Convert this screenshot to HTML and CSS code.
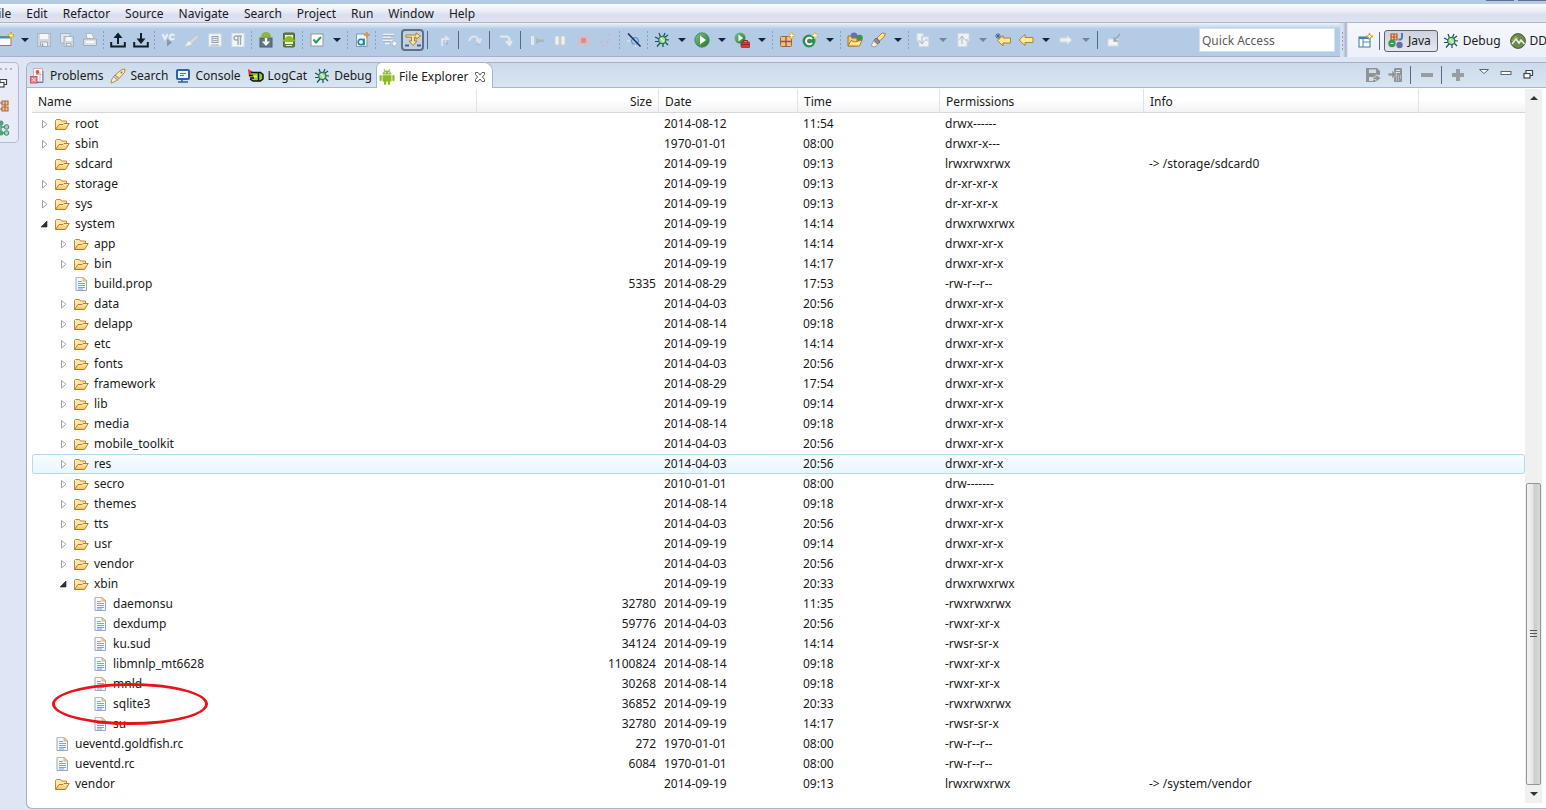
FILE: index.html
```html
<!DOCTYPE html>
<html lang="en">
<head>
<meta charset="utf-8">
<title>File Explorer</title>
<link rel="stylesheet" href="styles.css">
</head>
<body>
<svg class="defs" aria-hidden="true">
<defs>
<linearGradient id="gold" x1="0" y1="0" x2="0" y2="1"><stop offset="0" stop-color="#fff2bf"/><stop offset="1" stop-color="#f6bd5c"/></linearGradient>
<linearGradient id="green" x1="0" y1="0" x2="1" y2="1"><stop offset="0" stop-color="#7cc47c"/><stop offset="1" stop-color="#1c7a34"/></linearGradient>
</defs>
<symbol id="folder" viewBox="0 0 16 16"><path d="M1.500 13.500V4.500L2.500 3.500H6.500L7.500 5H12.500V8" fill="#fde7a9" stroke="#c08a3c"/><path d="M1.500 13.500L5 8.500H9L10 7.500H15.200L11.500 13.500Z" fill="url(#gold)" stroke="#b9792e"/></symbol>
<symbol id="file" viewBox="0 0 16 16"><path d="M3 1.500H10L13.500 5V14.500H3Z" fill="#f3f8ff" stroke="#94a7c4"/><path d="M3 1.500H10L13.500 5" fill="none" stroke="#c9b98a"/><path d="M10 1.500V5H13.500Z" fill="#f5deb0" stroke="#c9a86a" stroke-width=".8"/><path d="M5 5.500H9M5 7.500H12M5 9.500H12M5 11.500H12M5 13H10" stroke="#7ea2da"/></symbol>
<symbol id="closed" viewBox="0 0 16 16"><path d="M4.500 4.500V12L9 8.250Z" fill="#fff" stroke="#a2a2a2"/></symbol>
<symbol id="open" viewBox="0 0 16 16"><path d="M9 5V11H3Z" fill="#333" stroke="#222" stroke-width=".6"/></symbol>
<symbol id="down" viewBox="0 0 16 16"><path d="M4 6H12L8 10Z" fill="currentColor"/></symbol>
<symbol id="bug" viewBox="0 0 16 16"><path d="M5 1L6.500 5M11 1L9.500 4.500M1 5L5 7M1 9.500H5M3 14.500L6 11M9 11V15M11 10L14 13M11 7.500L15 8M10.500 5.500L14 3" stroke="#174f55" stroke-width="1.200" fill="none"/><circle cx="8.300" cy="8" r="3.600" fill="#a9dc9b" stroke="#2c7652" stroke-width="1.300"/><path d="M7 6L10 10" stroke="#e9ffe0"/></symbol>
<symbol id="torch" viewBox="0 0 16 16"><path d="M5 7L12 1.500L15 1L14.500 4.500L9 10.500Z" fill="#ffe9a3" stroke="#b78b42"/><path d="M5 7L9 10.500L7.500 12L3.500 8.500Z" fill="#d9d3e8" stroke="#9a82a6"/><path d="M3.500 8.500L7.500 12L4 14L1 15L1.500 12Z" fill="#f7ead0" stroke="#b1915e"/><circle cx="11.500" cy="4.500" r="1" fill="#5e79ba"/></symbol>
<symbol id="console" viewBox="0 0 16 16"><rect x="2" y="2" width="12" height="9" rx="1" fill="#e9f3ff" stroke="#2d62a4" stroke-width="2"/><path d="M5 5.500H11M5 7.500H9" stroke="#4d75a9"/><path d="M3 14H13M7 12V14" stroke="#2d62a4" stroke-width="1.600"/></symbol>
<symbol id="problems" viewBox="0 0 16 16"><path d="M3.500 .5H12.500V13.500H3.500Z" fill="#fff" stroke="#d3aeb2"/><path d="M7 2V6M10 4V13M6 6.500H12" stroke="#d9b4b4"/><circle cx="7.500" cy="4" r="1.900" fill="#e0554b"/><path d="M13 3V14.500H6" stroke="#5d84b5" fill="none"/><rect x=".5" y="8.500" width="6.500" height="6.500" fill="#e98a8a" stroke="#c95560"/><path d="M2 10L5.500 13.500M5.500 10L2 13.500" stroke="#f9dada"/></symbol>
<symbol id="logcat" viewBox="0 0 16 16"><path d="M0 1L6 4.500L1 9Z" fill="#e3311f"/><path d="M3 4.500H12.500L15 6.500V11L12.500 13H5L2 11" fill="#92c83e" stroke="#111" stroke-width="1.500"/><path d="M1 7.500H5M2 10H6M10.500 5V13" stroke="#111" stroke-width="1.400"/><path d="M6 8.500H9" stroke="#ffe84a" stroke-width="2"/></symbol>
<symbol id="android" viewBox="0 0 16 16"><g fill="#8db92a"><path d="M3.500 5.500A4.500 4 0 0 1 12.500 5.500Z"/><path d="M3.500 6.200H12.500V12.500H3.500Z"/><rect x=".5" y="6" width="2.200" height="6" rx="1"/><rect x="13.300" y="6" width="2.200" height="6" rx="1"/><rect x="5" y="11" width="2.200" height="5" rx="1"/><rect x="8.800" y="11" width="2.200" height="5" rx="1"/></g><path d="M5 0L6.200 2M11 0L9.800 2" stroke="#8db92a"/><circle cx="6.200" cy="3.800" r=".7" fill="#fff"/><circle cx="9.800" cy="3.800" r=".7" fill="#fff"/></symbol>
<symbol id="new" viewBox="0 0 16 16"><rect x="1" y="4.500" width="12" height="9" fill="#f8fbff" stroke="#9a803d"/><path d="M1 5.500H13" stroke="#4e87c7" stroke-width="2"/><path d="M13 0V7M9.500 3.500H16" stroke="#d8a820" stroke-width="2"/><path d="M13 1.500V5.500M11 3.500H15" stroke="#fff7b0"/></symbol>
<symbol id="save" viewBox="0 0 16 16"><path d="M1.500 1.500H14.500V14.500H1.500Z" fill="#cfd6df" stroke="#a9b4c1"/><path d="M4 2H12V7H4Z" fill="#f4f6f8"/><path d="M4.500 10H11.500V14.500H4.500Z" fill="#eef1f4" stroke="#a5afbc"/><path d="M6.500 11.500V14" stroke="#8f9aa8" stroke-width="1.500"/></symbol>
<symbol id="saveall" viewBox="0 0 16 16"><path d="M1.500 1.500H11V11H1.500Z" fill="#e3e7ec" stroke="#aab3bf"/><path d="M5 4.500H14.500V14.500H5Z" fill="#cfd6df" stroke="#a9b4c1"/><path d="M7 5H12.500V9H7Z" fill="#f7f8fa"/><path d="M7.500 11.500H12V14H7.500Z" fill="#f2f4f6" stroke="#a5afbc"/></symbol>
<symbol id="print" viewBox="0 0 16 16"><path d="M4 1.500H10L12 6.500H5Z" fill="#f4f5f7" stroke="#adb5c0"/><path d="M1.500 7H14.500V13.500H1.500Z" fill="#dde1e7" stroke="#a4adb9"/><path d="M4 10H12" stroke="#f8f9fa" stroke-width="2"/></symbol>
<symbol id="upload" viewBox="0 0 16 16"><path d="M1.200 10V14.500H14.800V10" fill="none" stroke="#151c29" stroke-width="2"/><path d="M8 12V4" stroke="#151c29" stroke-width="2"/><path d="M3.500 6L8 .5L12.500 6Z" fill="#151c29"/></symbol>
<symbol id="download" viewBox="0 0 16 16"><path d="M1.200 10V14.500H14.800V10" fill="none" stroke="#151c29" stroke-width="2"/><path d="M8 1V8" stroke="#151c29" stroke-width="2"/><path d="M3.500 6.500L8 12L12.500 6.500Z" fill="#151c29"/></symbol>
<symbol id="vc" viewBox="0 0 16 16"><path d="M1.500 2L4 7L6.500 2M13.500 3.500C10 1 8 4 9 6C10 8 12 7.500 13.500 6.500" fill="none" stroke="#edf1f5" stroke-width="2"/><path d="M6 7L11 10.500L6 14.500Z" fill="#8898aa"/></symbol>
<symbol id="pencil" viewBox="0 0 16 16"><path d="M3 12L6 9L13 3L14.500 5L8 11Z" fill="#dcdcd4" stroke="#c2c9ce"/><path d="M1 14.500L8 12L4.500 9Z" fill="#f8f2da"/></symbol>
<symbol id="block" viewBox="0 0 16 16"><rect x="2" y="2" width="12" height="12" fill="#f5f6f6" stroke="#dde2e6"/><rect x="5" y="4.500" width="6" height="6" fill="#e9edf0" stroke="#8d9caf"/><path d="M4 13H12M6 6.500H10M6 8.500H10" stroke="#9aa8b8"/></symbol>
<symbol id="pilcrow" viewBox="0 0 16 16"><rect x="2" y="1.500" width="12" height="13" fill="#f5f6f6" stroke="#dde2e6"/><path d="M12 4H6A2 2 0 0 0 6 8H8M8 4V13M10.500 4V13" fill="none" stroke="#9ba8b8" stroke-width="1.400"/></symbol>
<symbol id="sdk" viewBox="0 0 16 16"><path d="M3 5A5 5 0 0 1 13 5Z" fill="#8ab63a"/><rect x="2" y="6" width="12" height="9" fill="#637687" stroke="#49606f"/><path d="M8 6V12" stroke="#fff" stroke-width="2.400"/><path d="M4 9.500H12L8 14Z" fill="#fff"/></symbol>
<symbol id="avd" viewBox="0 0 16 16"><rect x="2.500" y="1" width="11" height="14" rx="1" fill="#687b42" stroke="#53643b"/><rect x="4" y="3" width="8" height="9" fill="#e8f1d8"/><path d="M4 8A4 4 0 0 1 12 8V10H4Z" fill="#8bbd29"/><path d="M1.500 8.500H14.500" stroke="#8bbd29" stroke-width="2"/><path d="M5 13.500H11" stroke="#dce8c8"/></symbol>
<symbol id="check" viewBox="0 0 16 16"><rect x="2" y="2" width="12" height="12" fill="#fff" stroke="#9a9a87"/><path d="M4.500 7.500L7 10.500L12 5" fill="none" stroke="#269a64" stroke-width="2"/></symbol>
<symbol id="newa" viewBox="0 0 16 16"><path d="M2.500 2H13V14.500H2.500Z" fill="#eaf5f7" stroke="#879b9e"/><circle cx="7" cy="10" r="2.800" fill="none" stroke="#168aa4" stroke-width="1.600"/><path d="M10 6.500V13.500" stroke="#168aa4" stroke-width="1.600"/><path d="M13 0V6M10 3H16" stroke="#e29347" stroke-width="1.800"/></symbol>
<symbol id="skip" viewBox="0 0 16 16"><path d="M1 2.500H12M1 5.500H9M1 8.500H12M3 11.500H8" stroke="#edf1f4" stroke-width="1.400"/><path d="M1 3.500H12M1 6.500H9M1 9.500H8" stroke="#95a7bb" stroke-width=".7"/><path d="M8 11H11V8L15.500 11.500L11 15V12.500H8Z" fill="#fff" stroke="#9ba9b8" stroke-width=".7"/></symbol>
<symbol id="filters" viewBox="0 0 16 16"><path d="M1 3H11V.8L15.500 4L11 7.200V5.200H9.500V9H12L8 13.500L4 9H6.500V5.200H1Z" fill="#fbe58c" stroke="#a4743f" stroke-width=".9"/><path d="M0 13.500H4M12 13.500H16" stroke="#34699d" stroke-width="2"/></symbol>
<symbol id="stepin" viewBox="0 0 16 16"><path d="M6 14V7H12M9 4L12.500 7L9 10" fill="none" stroke="#dfe4ea" stroke-width="2"/><path d="M11 8V13" stroke="#98aabd"/></symbol>
<symbol id="stepover" viewBox="0 0 16 16"><path d="M2 9C4 3 10 3 12 9M9 8L12.500 10.500L14 6.500" fill="none" stroke="#dfe4ea" stroke-width="2"/><path d="M8 12.500H13" stroke="#aebac8"/></symbol>
<symbol id="stepret" viewBox="0 0 16 16"><path d="M2 4.500H9Q12 5 11.500 11M8 9L11.500 13L14 9" fill="none" stroke="#e6e9ed" stroke-width="2"/></symbol>
<symbol id="resume" viewBox="0 0 16 16"><path d="M2 4H5V13H2Z" fill="#e5e9ed"/><path d="M7 6L11 7.500H15V10H11L7 12Z" fill="#a8b7b8"/></symbol>
<symbol id="pause" viewBox="0 0 16 16"><path d="M3 4H7V13H3ZM9 4H13V13H9Z" fill="#f0f0ea" stroke="#c7ccd0" stroke-width=".8"/></symbol>
<symbol id="stop" viewBox="0 0 16 16"><rect x="3" y="4" width="11" height="9" rx="2" fill="#dfb9bf"/><rect x="6" y="6" width="5" height="5" rx="1" fill="#d48f92"/></symbol>
<symbol id="disc" viewBox="0 0 16 16"><path d="M2 11L5 8M8 12L12 6M10 4L13 2M3 14H6" stroke="#c6bccb" stroke-width="1.500"/></symbol>
<symbol id="nobp" viewBox="0 0 16 16"><circle cx="9" cy="9" r="3.500" fill="#a7cae8" stroke="#5483b5"/><path d="M2 1.500L14.500 14.500" stroke="#172c59" stroke-width="1.500"/><path d="M4 9H1M10 15L9 12" stroke="#e5edf7"/></symbol>
<symbol id="run" viewBox="0 0 16 16"><circle cx="8" cy="8" r="7.200" fill="url(#green)" stroke="#39834b" stroke-width=".8"/><path d="M6 3.500L12 8L6 12.500Z" fill="#fff"/></symbol>
<symbol id="runext" viewBox="0 0 16 16"><circle cx="6" cy="6" r="5.500" fill="url(#green)"/><path d="M4.500 2.500L9 6L4.500 9.500Z" fill="#fff"/><rect x="7" y="10" width="9" height="5.500" rx="1" fill="#d83b32" stroke="#8e2925" stroke-width=".7"/><path d="M9.500 10V8.500H13.500V10M7 12.500H16" fill="none" stroke="#842c2b"/></symbol>
<symbol id="pkg" viewBox="0 0 16 16"><rect x="1.500" y="4.500" width="11" height="10" rx="1" fill="#efbd8d" stroke="#a0673a"/><path d="M7 4V15M1 9.500H13" stroke="#935a33" stroke-width="1.300"/><path d="M12.500 0V7M9 3.500H16" stroke="#dfb73d" stroke-width="2"/><path d="M12.500 1.500V5.500M10.500 3.500H14.500" stroke="#fff"/></symbol>
<symbol id="class" viewBox="0 0 16 16"><circle cx="7" cy="9" r="6.500" fill="#2f9054"/><path d="M10 7A3.300 3.300 0 1 0 10 11" fill="none" stroke="#fff" stroke-width="2"/><path d="M13 0V7M9.500 3.500H16" stroke="#d8bd4f" stroke-width="2"/><path d="M13 1.500V5.500M11 3.500H15" stroke="#fff"/></symbol>
<symbol id="type" viewBox="0 0 16 16"><circle cx="7" cy="4" r="3.500" fill="#6470b5"/><circle cx="12.500" cy="6" r="3.300" fill="#389551"/><path d="M1 14V4H4L5 6H10V14Z" fill="#f3cd66" stroke="#a96d28"/><path d="M1 14L4 8.500L8 10L15 8L12.500 14Z" fill="#ffe89c" stroke="#b37b28"/></symbol>
<symbol id="brush" viewBox="0 0 16 16"><path d="M7 6L12 1L15.500 1.500L14 5L9.500 9Z" fill="#ffe28d" stroke="#b78131"/><path d="M6 6L10 10L7.500 12L4 8.500Z" fill="#8194ad" stroke="#6d6775"/><path d="M3.500 9L7.500 12.500L5 15L1 14Z" fill="#f7efdf" stroke="#a99b8c"/></symbol>
<symbol id="annot" viewBox="0 0 16 16"><path d="M2 1.500H8V5H13.500V14.500H4V9H2Z" fill="#eef1f3" stroke="#d4dae0"/><path d="M7 4V11M4.500 8.500L7 12L9.500 8.500M10 8H13" fill="none" stroke="#aab7c3"/></symbol>
<symbol id="annotup" viewBox="0 0 16 16"><path d="M3 1.500H14V9H12V14.500H3Z" fill="#eef1f3" stroke="#d4dae0"/><path d="M7 12V5M4.500 7.500L7 4L9.500 7.500M10 8H13" fill="none" stroke="#aab7c3"/></symbol>
<symbol id="back" viewBox="0 0 16 16"><path d="M1 8L7 2.500V5.500H15V10.500H7V13.500Z" fill="#ffe891" stroke="#ac8138"/></symbol>
<symbol id="lastedit" viewBox="0 0 16 16"><path d="M2.500 8.500L8 3.500V6H15.500V11H8V14Z" fill="#ffe891" stroke="#ac8138"/><path d="M3 1V7M0 4H6M1 2L5 6M5 2L1 6" stroke="#405370" stroke-width=".8"/></symbol>
<symbol id="forward" viewBox="0 0 16 16"><path d="M14 8L9 3.500V6H2V10H9V12.500Z" fill="#edf0f2" stroke="#d3d6da"/></symbol>
<symbol id="pin" viewBox="0 0 16 16"><rect x="2" y="7" width="10" height="7" fill="#f4f4f1" stroke="#d3d8db"/><path d="M8 9L14 2M8 5V9H12" stroke="#9aa9a5" fill="none" stroke-width="1.300"/></symbol>
<symbol id="persp" viewBox="0 0 16 16"><rect x="2" y="4" width="11" height="10" fill="#fff" stroke="#3672a1"/><path d="M2 5H13" stroke="#3e82b4" stroke-width="2"/><path d="M6 5V14M6 9H13" stroke="#4d86b0"/><path d="M12.500 0V7M9 3.500H16" stroke="#d2a831" stroke-width="1.800"/><path d="M12.500 2V5M11 3.500H14" stroke="#fff"/></symbol>
<symbol id="java" viewBox="0 0 16 16"><path d="M3 1H9V7H3ZM6 1V7M3 4H9" fill="#f6c49d" stroke="#b3552b" stroke-width="1.200"/><path d="M14 0V4Q14 7 10.500 6.500" fill="none" stroke="#467fba" stroke-width="2"/><circle cx="4" cy="10.500" r="3.700" fill="#369a50"/><path d="M2.500 10.500H5.500" stroke="#d7f0d5"/><circle cx="11.500" cy="12" r="3.200" fill="#666cae"/></symbol>
<symbol id="ddms" viewBox="0 0 16 16"><circle cx="8" cy="8" r="7.400" fill="#6f8a48" stroke="#4b5a3a"/><path d="M2 11L6 6L9 10L11 7L14.500 11" fill="none" stroke="#e8efd9" stroke-width="1.600"/><path d="M2 8L6 3.500L8 6" fill="none" stroke="#9fb57a"/></symbol>
<symbol id="pull" viewBox="0 0 16 16"><path d="M1 1H12L15 4V8H11V15H1Z" fill="#8f9397"/><path d="M4 2.500H11V6H4ZM4 10H8V14H4Z" fill="#d6dfe7"/><path d="M8 10H11V7.500L16 11L11 15V12.500H8Z" fill="#8f9397" stroke="#d8e3ee" stroke-width=".7"/></symbol>
<symbol id="push" viewBox="0 0 16 16"><rect x="6" y="1" width="8" height="14" rx="1" fill="#8f9397"/><path d="M8 3.500H12M8 5.500H12M8 9H9M10 9H11M12 9H13M8 11H9M10 11H11M12 11H13M8 13H9M10 13H11" stroke="#dbe4ec"/><path d="M0 6H4V3L9 7.500L4 12V9H0Z" fill="#8f9397" stroke="#d8e3ee" stroke-width=".7"/></symbol>
<symbol id="minus" viewBox="0 0 16 16"><path d="M2 8H14" stroke="#999da1" stroke-width="4"/></symbol>
<symbol id="plus" viewBox="0 0 16 16"><path d="M2 8H14M8 2V14" stroke="#999da1" stroke-width="4"/></symbol>
<symbol id="viewmenu" viewBox="0 0 16 16"><path d="M3.500 2.500H12.500L8 6.500Z" fill="#fff" stroke="#56667b"/></symbol>
<symbol id="minimize" viewBox="0 0 16 16"><rect x="3" y="4.500" width="10" height="3" fill="#fff" stroke="#56667b"/></symbol>
<symbol id="restore" viewBox="0 0 16 16"><path d="M6 6V3.500H12.500V8.500H10" fill="#fff" stroke="#3e454f" stroke-width="1.200"/><rect x="4" y="6.500" width="6" height="4.500" fill="#fff" stroke="#3e454f" stroke-width="1.200"/></symbol>
<symbol id="close" viewBox="0 0 16 16"><path d="M3.500 3.500H6L8 6L10 3.500H12.500V5.500L10.500 8L12.500 10.500V12.500H10L8 10L6 12.500H3.500V10.500L5.500 8L3.500 5.500Z" fill="#fff" stroke="#606060"/></symbol>
<symbol id="pkgtree" viewBox="0 0 16 16"><path d="M8 3H14V7H8ZM8 9H14V13H8ZM11 3V13" fill="#f2c39c" stroke="#b06a34" stroke-width="1.200"/><path d="M0 8H5V5H8M5 8V11H8" fill="none" stroke="#8a6b52"/></symbol>
<symbol id="hier" viewBox="0 0 16 16"><path d="M7 3V13H12M7 7H12" fill="none" stroke="#4d8c73" stroke-width="1.300"/><circle cx="7" cy="3" r="2.500" fill="#4ba574"/><circle cx="7" cy="13" r="2.500" fill="#4ba574"/><circle cx="12.500" cy="7" r="2.300" fill="#9fd3b5" stroke="#3d8a63"/><circle cx="12.500" cy="13" r="2.300" fill="#9fd3b5" stroke="#3d8a63"/></symbol>
</svg>

<div class="titlebar"><span class="winbtn"></span><span class="winbtn"></span></div>
<nav class="menubar">
<button>File</button><button>Edit</button><button>Refactor</button><button>Source</button><button>Navigate</button><button>Search</button><button>Project</button><button>Run</button><button>Window</button><button>Help</button>
</nav>

<header class="coolbar">
<div class="toolbar" role="toolbar">
<button class="tool" aria-label="New"><svg><use href="#new"/></svg></button><button class="drop" aria-label="New menu"><svg><use href="#down"/></svg></button>
<button class="tool" aria-label="Save"><svg><use href="#save"/></svg></button>
<button class="tool" aria-label="Save All"><svg><use href="#saveall"/></svg></button>
<button class="tool" aria-label="Print"><svg><use href="#print"/></svg></button>
<i class="dots"></i>
<button class="tool" aria-label="Upload"><svg><use href="#upload"/></svg></button>
<button class="tool" aria-label="Download"><svg><use href="#download"/></svg></button>
<i class="dots"></i>
<button class="tool" aria-label="VC"><svg><use href="#vc"/></svg></button>
<button class="tool" aria-label="Mark"><svg><use href="#pencil"/></svg></button>
<button class="tool" aria-label="Block selection"><svg><use href="#block"/></svg></button>
<button class="tool" aria-label="Show whitespace"><svg><use href="#pilcrow"/></svg></button>
<i class="dots"></i>
<button class="tool" aria-label="SDK Manager"><svg><use href="#sdk"/></svg></button>
<button class="tool" aria-label="Device Manager"><svg><use href="#avd"/></svg></button>
<i class="dots"></i>
<button class="tool" aria-label="Lint"><svg><use href="#check"/></svg></button><button class="drop" aria-label="Lint menu"><svg><use href="#down"/></svg></button>
<i class="dots"></i>
<button class="tool" aria-label="New Android file"><svg><use href="#newa"/></svg></button>
<i class="dots"></i>
<button class="tool" aria-label="Skip"><svg><use href="#skip"/></svg></button>
<button class="tool pressed" aria-label="Step filters"><svg><use href="#filters"/></svg></button>
<i class="sep"></i>
<button class="tool" aria-label="Step into"><svg><use href="#stepin"/></svg></button>
<i class="sep"></i>
<button class="tool" aria-label="Step over"><svg><use href="#stepover"/></svg></button>
<i class="sep"></i>
<button class="tool" aria-label="Step return"><svg><use href="#stepret"/></svg></button>
<i class="sep"></i>
<button class="tool" aria-label="Resume"><svg><use href="#resume"/></svg></button>
<button class="tool" aria-label="Suspend"><svg><use href="#pause"/></svg></button>
<button class="tool" aria-label="Terminate"><svg><use href="#stop"/></svg></button>
<button class="tool" aria-label="Disconnect"><svg><use href="#disc"/></svg></button>
<i class="dots"></i>
<button class="tool" aria-label="Skip breakpoints"><svg><use href="#nobp"/></svg></button>
<i class="dots"></i>
<button class="tool" aria-label="Debug"><svg><use href="#bug"/></svg></button><button class="drop" aria-label="Debug menu"><svg><use href="#down"/></svg></button>
<button class="tool" aria-label="Run"><svg><use href="#run"/></svg></button><button class="drop" aria-label="Run menu"><svg><use href="#down"/></svg></button>
<button class="tool" aria-label="External tools"><svg><use href="#runext"/></svg></button><button class="drop" aria-label="External tools menu"><svg><use href="#down"/></svg></button>
<i class="dots"></i>
<button class="tool" aria-label="New package"><svg><use href="#pkg"/></svg></button>
<button class="tool" aria-label="New class"><svg><use href="#class"/></svg></button><button class="drop" aria-label="New class menu"><svg><use href="#down"/></svg></button>
<i class="dots"></i>
<button class="tool" aria-label="Open type"><svg><use href="#type"/></svg></button>
<button class="tool" aria-label="Search"><svg><use href="#brush"/></svg></button><button class="drop" aria-label="Search menu"><svg><use href="#down"/></svg></button>
<i class="dots"></i>
<button class="tool" aria-label="Next annotation"><svg><use href="#annot"/></svg></button><button class="drop off" aria-label="Next annotation menu"><svg><use href="#down"/></svg></button>
<button class="tool" aria-label="Previous annotation"><svg><use href="#annotup"/></svg></button><button class="drop off" aria-label="Previous annotation menu"><svg><use href="#down"/></svg></button>
<button class="tool" aria-label="Last edit"><svg><use href="#lastedit"/></svg></button>
<button class="tool" aria-label="Back"><svg><use href="#back"/></svg></button><button class="drop" aria-label="Back menu"><svg><use href="#down"/></svg></button>
<button class="tool" aria-label="Forward"><svg><use href="#forward"/></svg></button><button class="drop off" aria-label="Forward menu"><svg><use href="#down"/></svg></button>
<i class="sep"></i>
<button class="tool" aria-label="Pin editor"><svg><use href="#pin"/></svg></button>
<input class="quick" type="text" placeholder="Quick Access" aria-label="Quick Access">
</div>
<div class="perspectives">
<i class="dots"></i>
<button class="tool open-persp" aria-label="Open perspective"><svg><use href="#persp"/></svg></button>
<i class="sep"></i>
<button class="persp active"><svg><use href="#java"/></svg>Java</button>
<button class="persp"><svg><use href="#bug"/></svg>Debug</button>
<button class="persp"><svg><use href="#ddms"/></svg>DDMS</button>
</div>
</header>

<div class="workbench">
<aside class="trim">
<i class="grip"></i>
<button aria-label="Restore"><svg><use href="#restore"/></svg></button>
<button aria-label="Package Explorer"><svg><use href="#pkgtree"/></svg></button>
<button aria-label="Hierarchy"><svg><use href="#hier"/></svg></button>
</aside>
<main class="view">
<div class="tabs">
<button class="tab"><svg><use href="#problems"/></svg>Problems</button>
<button class="tab"><svg><use href="#torch"/></svg>Search</button>
<button class="tab"><svg><use href="#console"/></svg>Console</button>
<button class="tab"><svg><use href="#logcat"/></svg>LogCat</button>
<button class="tab"><svg><use href="#bug"/></svg>Debug</button>
<button class="tab current"><svg><use href="#android"/></svg>File Explorer<svg class="x"><use href="#close"/></svg></button>
<div class="viewtools">
<button class="tool" aria-label="Pull file"><svg><use href="#pull"/></svg></button>
<button class="tool" aria-label="Push file"><svg><use href="#push"/></svg></button>
<i class="sep"></i>
<button class="tool" aria-label="Delete"><svg><use href="#minus"/></svg></button>
<i class="sep"></i>
<button class="tool" aria-label="New folder"><svg><use href="#plus"/></svg></button>
<div class="corner">
<button class="tool" aria-label="View menu"><svg><use href="#viewmenu"/></svg></button>
<button class="tool" aria-label="Minimize"><svg><use href="#minimize"/></svg></button>
<button class="tool" aria-label="Restore view"><svg><use href="#restore"/></svg></button>
</div>
</div>
</div>
<div class="content">
<div class="listing">
<table class="files">
<colgroup><col class="c-name"><col class="c-size"><col class="c-date"><col class="c-time"><col class="c-perm"><col class="c-info"><col></colgroup>
<thead><tr><th>Name</th><th class="num">Size</th><th>Date</th><th>Time</th><th>Permissions</th><th>Info</th><th></th></tr></thead>
<tbody>
<tr><td class="l1 shut">root</td><td></td><td>2014-08-12</td><td>11:54</td><td>drwx------</td><td></td><td></td></tr>
<tr><td class="l1 shut">sbin</td><td></td><td>1970-01-01</td><td>08:00</td><td>drwxr-x---</td><td></td><td></td></tr>
<tr><td class="l1 link">sdcard</td><td></td><td>2014-09-19</td><td>09:13</td><td>lrwxrwxrwx</td><td>-&gt; /storage/sdcard0</td><td></td></tr>
<tr><td class="l1 shut">storage</td><td></td><td>2014-09-19</td><td>09:13</td><td>dr-xr-xr-x</td><td></td><td></td></tr>
<tr><td class="l1 shut">sys</td><td></td><td>2014-09-19</td><td>09:13</td><td>dr-xr-xr-x</td><td></td><td></td></tr>
<tr><td class="l1 expanded">system</td><td></td><td>2014-09-19</td><td>14:14</td><td>drwxrwxrwx</td><td></td><td></td></tr>
<tr><td class="l2 shut">app</td><td></td><td>2014-09-19</td><td>14:14</td><td>drwxr-xr-x</td><td></td><td></td></tr>
<tr><td class="l2 shut">bin</td><td></td><td>2014-09-19</td><td>14:17</td><td>drwxr-xr-x</td><td></td><td></td></tr>
<tr><td class="l2 doc">build.prop</td><td class="num">5335</td><td>2014-08-29</td><td>17:53</td><td>-rw-r--r--</td><td></td><td></td></tr>
<tr><td class="l2 shut">data</td><td></td><td>2014-04-03</td><td>20:56</td><td>drwxr-xr-x</td><td></td><td></td></tr>
<tr><td class="l2 shut">delapp</td><td></td><td>2014-08-14</td><td>09:18</td><td>drwxr-xr-x</td><td></td><td></td></tr>
<tr><td class="l2 shut">etc</td><td></td><td>2014-09-19</td><td>14:14</td><td>drwxr-xr-x</td><td></td><td></td></tr>
<tr><td class="l2 shut">fonts</td><td></td><td>2014-04-03</td><td>20:56</td><td>drwxr-xr-x</td><td></td><td></td></tr>
<tr><td class="l2 shut">framework</td><td></td><td>2014-08-29</td><td>17:54</td><td>drwxr-xr-x</td><td></td><td></td></tr>
<tr><td class="l2 shut">lib</td><td></td><td>2014-09-19</td><td>09:14</td><td>drwxr-xr-x</td><td></td><td></td></tr>
<tr><td class="l2 shut">media</td><td></td><td>2014-08-14</td><td>09:18</td><td>drwxr-xr-x</td><td></td><td></td></tr>
<tr><td class="l2 shut">mobile_toolkit</td><td></td><td>2014-04-03</td><td>20:56</td><td>drwxr-xr-x</td><td></td><td></td></tr>
<tr class="hover"><td class="l2 shut">res</td><td></td><td>2014-04-03</td><td>20:56</td><td>drwxr-xr-x</td><td></td><td></td></tr>
<tr><td class="l2 shut">secro</td><td></td><td>2010-01-01</td><td>08:00</td><td>drw-------</td><td></td><td></td></tr>
<tr><td class="l2 shut">themes</td><td></td><td>2014-08-14</td><td>09:18</td><td>drwxr-xr-x</td><td></td><td></td></tr>
<tr><td class="l2 shut">tts</td><td></td><td>2014-04-03</td><td>20:56</td><td>drwxr-xr-x</td><td></td><td></td></tr>
<tr><td class="l2 shut">usr</td><td></td><td>2014-09-19</td><td>09:14</td><td>drwxr-xr-x</td><td></td><td></td></tr>
<tr><td class="l2 shut">vendor</td><td></td><td>2014-04-03</td><td>20:56</td><td>drwxr-xr-x</td><td></td><td></td></tr>
<tr><td class="l2 expanded">xbin</td><td></td><td>2014-09-19</td><td>20:33</td><td>drwxrwxrwx</td><td></td><td></td></tr>
<tr><td class="l3 doc">daemonsu</td><td class="num">32780</td><td>2014-09-19</td><td>11:35</td><td>-rwxrwxrwx</td><td></td><td></td></tr>
<tr><td class="l3 doc">dexdump</td><td class="num">59776</td><td>2014-04-03</td><td>20:56</td><td>-rwxr-xr-x</td><td></td><td></td></tr>
<tr><td class="l3 doc">ku.sud</td><td class="num">34124</td><td>2014-09-19</td><td>14:14</td><td>-rwsr-sr-x</td><td></td><td></td></tr>
<tr><td class="l3 doc">libmnlp_mt6628</td><td class="num">1100824</td><td>2014-08-14</td><td>09:18</td><td>-rwxr-xr-x</td><td></td><td></td></tr>
<tr><td class="l3 doc">mnld</td><td class="num">30268</td><td>2014-08-14</td><td>09:18</td><td>-rwxr-xr-x</td><td></td><td></td></tr>
<tr><td class="l3 doc marked">sqlite3<span class="ring"></span></td><td class="num">36852</td><td>2014-09-19</td><td>20:33</td><td>-rwxrwxrwx</td><td></td><td></td></tr>
<tr><td class="l3 doc">su</td><td class="num">32780</td><td>2014-09-19</td><td>14:17</td><td>-rwsr-sr-x</td><td></td><td></td></tr>
<tr><td class="l1 doc">ueventd.goldfish.rc</td><td class="num">272</td><td>1970-01-01</td><td>08:00</td><td>-rw-r--r--</td><td></td><td></td></tr>
<tr><td class="l1 doc">ueventd.rc</td><td class="num">6084</td><td>1970-01-01</td><td>08:00</td><td>-rw-r--r--</td><td></td><td></td></tr>
<tr><td class="l1 link">vendor</td><td></td><td>2014-09-19</td><td>09:13</td><td>lrwxrwxrwx</td><td>-&gt; /system/vendor</td><td></td></tr>
</tbody>
</table>
</div>
<div class="scrollbar">
<button aria-label="Scroll up" class="up"></button>
<div class="track"></div>
<div class="thumb"><i></i></div>
<button aria-label="Scroll down" class="down"></button>
</div>
</div>
</main>
</div>
<script src="tree.js"></script>
</body>
</html>
```

FILE: tree.js
```js
// Puts the expand arrow and the type icon before each name in the tree column.
const svg = (id) => `<svg class="ic" aria-hidden="true"><use href="#${id}"/></svg>`;
document.querySelectorAll('.files td:first-child').forEach((cell) => {
  const kind = cell.classList;
  let twist = '<span class="twist"></span>';
  if (kind.contains('shut')) twist = `<button class="twist" aria-label="Expand">${svg('closed')}</button>`;
  if (kind.contains('expanded')) twist = `<button class="twist" aria-label="Collapse">${svg('open')}</button>`;
  const icon = svg(kind.contains('doc') ? 'file' : 'folder');
  cell.innerHTML = `<div class="node">${twist}${icon}<span>${cell.firstChild.textContent}</span></div>` +
    (cell.querySelector('.ring') ? '<span class="ring"></span>' : '');
});
```

FILE: styles.css
```css
* { box-sizing: border-box; }
body {
  margin: 0;
  min-height: 100vh;
  display: flex;
  flex-direction: column;
  overflow: hidden;
  background: #dfe5f5;
  color: #1a1a1a;
  font: 12px/16px "Noto Sans", "Open Sans", sans-serif;
}
button {
  margin: 0;
  padding: 0;
  border: 0;
  background: none;
  color: inherit;
  font: inherit;
  white-space: nowrap;
}
svg { width: 16px; height: 16px; flex: none; display: block; }
.defs { position: absolute; width: 0; height: 0; }

.titlebar { height: 4px; background: #b5cbe5; display: flex; justify-content: flex-end; gap: 4px; }
.winbtn { width: 28px; height: 1px; background: #5f7391; }
.menubar {
  height: 19px;
  display: flex;
  align-items: center;
  gap: 15px;
  padding-top: 2px;
  background: linear-gradient(#fafcff, #e6eaf5 45%, #dadff0 60%, #dfe4f3);
  border-bottom: 1px solid #b3b3c6;
}
.menubar button:first-child { margin-left: -8px; }

.coolbar {
  display: flex;
  height: 34px;
  background: linear-gradient(#f5f7fc, #eef0fa);
}
.toolbar {
  flex: 1;
  min-width: 0;
  display: flex;
  align-items: center;
  padding-right: 5px;
  background: linear-gradient(#edf3fa, #b3cbe5 6px);
  border-bottom: 1px solid #a5b1ca;
}
.tool { width: 23px; height: 22px; flex: none; display: flex; align-items: center; justify-content: center; }
.toolbar > .tool:first-child { margin-left: -6px; }
.toolbar > .tool:first-child + .drop { width: 15px; }
.pressed { border: 2px solid #5d718b; border-radius: 4px; background: #c6d0dd; }
.drop { width: 17px; height: 22px; flex: none; display: flex; align-items: center; justify-content: center; color: #16233a; }
.drop.off { color: #73869e; }
.dots { width: 5px; height: 18px; flex: none; background: repeating-linear-gradient(#8b9fb5 0 2px, transparent 2px 4px) 2px 0 / 1px 100% no-repeat; }
.sep { width: 8px; height: 18px; flex: none; background: linear-gradient(#526b86, #526b86) 3px 0 / 1px 100% no-repeat; }
.quick {
  width: 136px;
  height: 24px;
  margin-left: auto;
  flex: none;
  padding: 2px 3px 0 2px;
  border: 1px solid #d6e0ec;
  background: #fff;
  color: #444;
  font: 12px/16px "Noto Sans", sans-serif;
}
.quick::placeholder { color: #5a5a5a; opacity: 1; }
.perspectives {
  width: 206px;
  flex: none;
  display: flex;
  align-items: center;
  overflow: hidden;
  padding-top: 2px;
  background: linear-gradient(90deg, #d5e1f0 0 3px, #a9b2c8 6px, transparent 8px);
}
.perspectives .open-persp { margin-left: 8px; }
.persp { height: 22px; display: flex; align-items: center; gap: 4px; padding: 0 6px 0 3px; flex: none; }
.persp.active { margin-right: 2px; border: 1px solid #5d6272; border-radius: 3px; background: linear-gradient(#cfd2dd, #e4e6f0); }

.workbench { flex: 1; display: flex; gap: 7px; padding-top: 5px; }
.trim {
  width: 19px;
  height: 81px;
  display: flex;
  flex-direction: column;
  align-items: flex-start;
  gap: 6px;
  padding-top: 5px;
  border: 1px solid #b4bace;
  border-left: 0;
  border-radius: 0 5px 5px 0;
  background: #e9ecf8;
}
.trim button { margin-left: -6px; }
.grip { width: 12px; height: 2px; background: repeating-linear-gradient(90deg, #b1b7c8 0 2px, transparent 2px 5px); }
.view {
  flex: 1;
  min-width: 0;
  display: flex;
  flex-direction: column;
  margin-bottom: 1px;
  border: 1px solid #a5b0c4;
  border-right: 0;
  border-radius: 6px 0 0 6px;
  background: #fff;
}
.tabs {
  height: 25px;
  display: flex;
  border-bottom: 1px solid #a9b7cc;
  border-radius: 5px 0 0 0;
  background: linear-gradient(#ccdaeb, #d8e5f2);
}
.tab { display: flex; align-items: center; gap: 4px; padding: 2px 4px 0 3px; }
.tab.current {
  height: 26px;
  margin-top: -1px;
  padding: 2px 4px 0 2px;
  border: 1px solid #a9b7cc;
  border-bottom: 0;
  border-radius: 6px 9px 0 0;
  background: #fff;
}
.viewtools { margin-left: auto; display: flex; align-items: center; padding-right: 7px; }
.corner { display: flex; align-items: center; margin-left: 4px; }
.corner .tool { width: 22px; }

.content { flex: 1; display: flex; padding: 1px 4px 5px 5px; }
.listing { flex: 1; min-width: 0; }
.files { width: 100%; table-layout: fixed; border-collapse: separate; border-spacing: 0; font-size: 12px; }
.c-name { width: 445px; }
.c-size { width: 182px; }
.c-date { width: 139px; }
.c-time { width: 142px; }
.c-perm { width: 204px; }
.c-info { width: 275px; }
.files th {
  height: 24px;
  padding: 2px 6px 0;
  border-right: 1px solid #e2e3e6;
  border-bottom: 1px solid #d8d8da;
  background: linear-gradient(#fff 45%, #f2f3f5);
  font-weight: 400;
  text-align: left;
}
.files th:last-child { border-right: 0; }
.files tbody::before { content: ""; display: block; height: 1px; }
.files td { height: 20px; padding: 0 5px; white-space: nowrap; }
.files th.num { text-align: right; }
.files td.num { text-align: right; padding-right: 3px; }
.files td.l1 { padding-left: 6px; }
.files td.l2 { padding-left: 25px; }
.files td.l3 { padding-left: 44px; }
.node { display: flex; align-items: center; }
.twist { width: 16px; height: 16px; flex: none; }
.node span:last-child { margin-left: 5px; }
.hover { background: linear-gradient(#fafdff, #e8f5fd); outline: 1px solid #b5daee; outline-offset: -1px; border-radius: 3px; }
.marked { position: relative; }
.ring { position: absolute; left: 20px; top: -11px; width: 156px; height: 42px; border: 3px solid #e8121a; border-radius: 50%; }

.scrollbar { width: 17px; padding: 0 1px; display: flex; flex-direction: column; background: #f0f0f1; }
.up, .down { height: 18px; display: flex; align-items: center; justify-content: center; }
.up::before, .down::before { content: ""; border: 4px solid transparent; }
.up::before { border-bottom-color: #333; border-top: 0; }
.down::before { border-top-color: #333; border-bottom: 0; }
.track { flex: 378; }
.thumb {
  flex: 302;
  display: flex;
  align-items: center;
  justify-content: center;
  border: 1px solid #949494;
  border-radius: 2px;
  background: linear-gradient(90deg, #f4f4f4, #e6e6e6 45%, #cdcdcd 55%, #d9d9d9);
}
.thumb i { width: 7px; height: 8px; background: repeating-linear-gradient(#555 0 1px, transparent 1px 3px); }
```
